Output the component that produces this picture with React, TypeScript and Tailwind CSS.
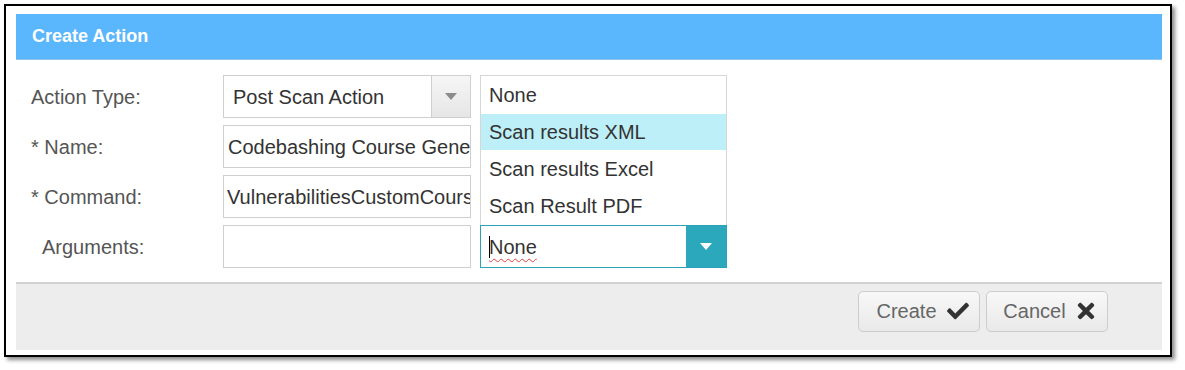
import { FaCheck, FaTimes } from 'react-icons/fa';

const font = { fontFamily: '"Liberation Sans", Arial, sans-serif' };

const options = [
  { label: 'None', h: 'h-[38px]' },
  { label: 'Scan results XML', h: 'h-[36px]' },
  { label: 'Scan results Excel', h: 'h-[37px]' },
  { label: 'Scan Result PDF', h: 'h-[38px]' },
];

function Caret({ color }: { color: string }) {
  return (
    <svg width="12" height="7" viewBox="0 0 12 7">
      <polygon points="0,0 12,0 6,7" fill={color} />
    </svg>
  );
}

function Row({ label, indent, children, extra }: { label: string; indent?: boolean; children: React.ReactNode; extra?: React.ReactNode }) {
  return (
    <div className="flex items-center h-[43px]">
      <div className={`w-[192px] text-[20px] text-[#555] ${indent ? 'pl-[11px]' : ''}`}>{label}</div>
      <div className="w-[248px] h-full">{children}</div>
      {extra}
    </div>
  );
}

export default function App() {
  return (
    <div className="w-[1185px] h-[370px] bg-white pt-1 pl-1" style={font}>
      <div className="w-[1168px] h-[353px] border-2 border-black bg-white shadow-[3px_3px_4px_rgba(0,0,0,0.45)] pt-2 pl-[10px]">
        <div className="w-[1146px] h-[336px] flex flex-col">
          {/* header */}
          <div className="h-[46px] bg-[#5ab6fd] border-b border-[#8fc3e8] flex items-center pl-4 text-white font-bold text-[18px]">
            Create Action
          </div>

          {/* form */}
          <div className="flex-1 pt-[15px] pl-[15px] flex flex-col gap-[7px]">
            <Row label="Action Type:">
              <div className="h-full border border-[#cfcfcf] flex">
                <div className="flex-1 flex items-center pl-[9px] text-[20px] text-[#333]">Post Scan Action</div>
                <div className="w-[39px] border-l border-[#cfcfcf] bg-gradient-to-b from-[#f6f6f6] to-[#e6e6e6] flex items-center justify-center">
                  <Caret color="#8c8c8c" />
                </div>
              </div>
            </Row>
            <Row label="* Name:">
              <div className="h-full border border-[#cfcfcf] flex items-center pl-[4px] overflow-hidden whitespace-nowrap text-[20px] text-[#333]">
                Codebashing Course Generator
              </div>
            </Row>
            <Row label="* Command:">
              <div className="h-full border border-[#cfcfcf] flex items-center pl-[3px] overflow-hidden whitespace-nowrap text-[20px] text-[#333]">
                VulnerabilitiesCustomCourse.exe
              </div>
            </Row>
            <Row
              label="Arguments:"
              indent
              extra={
                <div className="relative ml-[9px] w-[247px] h-full">
                  {/* open option list */}
                  <div className="absolute bottom-full left-0 w-full border border-b-0 border-[#d6d6d6] bg-white">
                    {options.map((o, i) => (
                      <div
                        key={o.label}
                        className={`${o.h} flex items-center pl-[8px] text-[20px] leading-none text-[#333] ${i === 1 ? 'bg-[#bdeff8]' : ''}`}
                      >
                        {o.label}
                      </div>
                    ))}
                  </div>
                  <div className="h-full border border-[#2aa3b6] flex bg-white">
                    <div className="flex-1 flex items-center pl-[8px] text-[20px] text-[#333]">
                      <span className="w-px h-[22px] bg-black -mr-px" />
                      <span className="underline decoration-wavy decoration-[#e04040] decoration-1 underline-offset-4">None</span>
                    </div>
                    <div className="w-[40px] bg-[#2ba8bb] flex items-center justify-center">
                      <Caret color="#ffffff" />
                    </div>
                  </div>
                </div>
              }
            >
              <div className="h-full border border-[#cfcfcf]" />
            </Row>
          </div>

          {/* footer */}
          <div className="h-[68px] border-t-2 border-[#d2d2d2] bg-[#ededed] flex justify-end items-start pt-[7px] pr-[54px] gap-[6px]">
            <button className="w-[122px] h-[41px] rounded-[5px] border border-[#cccccc] bg-gradient-to-b from-[#f8f8f8] to-[#e9e9e9] flex items-center justify-center gap-[9px] pl-[8px] pb-[2px] text-[20px] text-[#666]">
              Create
              <FaCheck className="text-[#333] w-[24px] h-[22px]" />
            </button>
            <button className="w-[122px] h-[41px] rounded-[5px] border border-[#cccccc] bg-gradient-to-b from-[#f8f8f8] to-[#e9e9e9] flex items-center justify-center gap-[9px] pl-[6px] pb-[2px] text-[20px] text-[#666]">
              Cancel
              <FaTimes className="text-[#333] w-[22px] h-[24px]" />
            </button>
          </div>
        </div>
      </div>
    </div>
  );
}
